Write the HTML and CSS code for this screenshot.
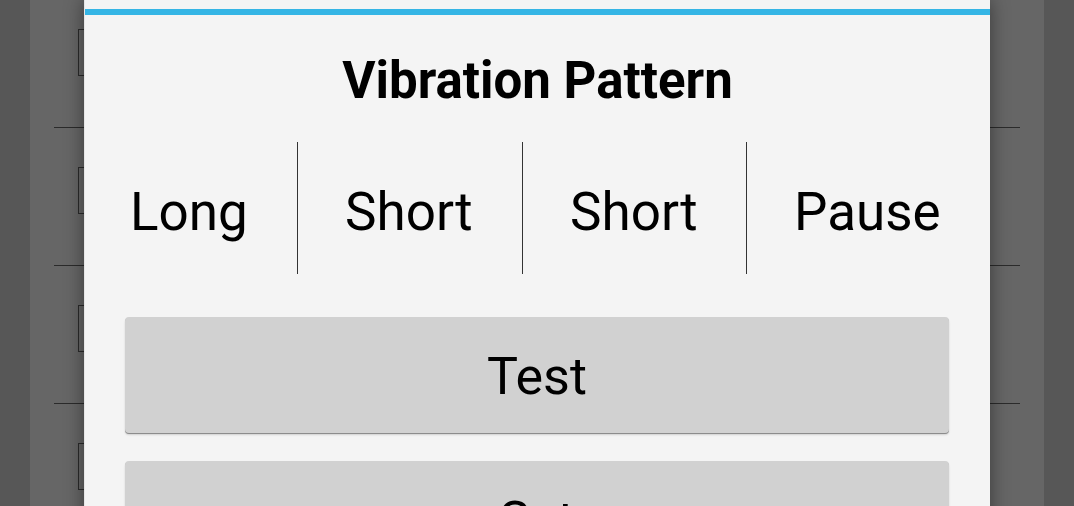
FILE: index.html
```html
<!DOCTYPE html>
<html lang="en">
<head>
  <meta charset="UTF-8">
  <meta name="viewport" content="width=device-width, initial-scale=1.0">
  <title>Vibration Pattern</title>
  <link rel="stylesheet" href="styles.css">
</head>
<body>
  <div class="screen">
    <ul class="list">
      <li class="row"><span class="checkbox"></span></li>
      <li class="row"><span class="checkbox"></span></li>
      <li class="row"><span class="checkbox"></span></li>
      <li class="row"><span class="checkbox"></span></li>
    </ul>
  </div>

  <div class="dialog">
    <div class="dialog-accent"></div>
    <h1 class="dialog-title">Vibration Pattern</h1>

    <div class="pattern">
      <div class="step first">Long</div>
      <div class="divider"></div>
      <div class="step">Short</div>
      <div class="divider"></div>
      <div class="step">Short</div>
      <div class="divider"></div>
      <div class="step">Pause</div>
    </div>

    <div class="actions">
      <button class="btn">Test</button>
      <button class="btn">Set</button>
    </div>
  </div>
</body>
</html>
```

FILE: styles.css
```css
html, body {
  height: 100%;
}

body {
  margin: 0;
  background-color: #575757;
  font-family: Roboto, "Noto Sans", sans-serif;
  overflow: hidden;
}

/* dimmed list behind the dialog */
.screen {
  height: 100%;
  padding: 0 30px;
}

.list {
  list-style: none;
  margin: -10px 0 0;
  padding: 0 24px;
  min-height: calc(100% + 10px);
  background-color: #666;
}

.row {
  height: 138px;
  border-bottom: 1px solid #2b2b2b;
  padding-top: 39px;
  box-sizing: border-box;
}

.checkbox {
  display: block;
  width: 44px;
  height: 45px;
  margin-left: 24px;
  border: 1px solid #2b2b2b;
}

/* dialog */
.dialog {
  position: absolute;
  left: 84px;
  top: 0;
  width: 906px;
  height: 560px;
  background-color: #f4f4f4;
  border-left: 1px solid #e6e6e6;
  box-sizing: border-box;
  box-shadow: 0 0 18px rgba(0, 0, 0, 0.45);
}

.dialog-accent {
  margin-top: 9px;
  height: 6px;
  background-color: #35b5e5;
}

.dialog-title {
  margin: 0;
  padding-top: 36px;
  height: 90px;
  box-sizing: border-box;
  text-align: center;
  font-size: 51px;
  line-height: 60px;
  font-weight: bold;
  color: #000;
}

.pattern {
  display: grid;
  grid-template-columns: 212px 1px 224px 1px 223px 1px auto;
  height: 132px;
  margin-top: 37px;
}

.step {
  display: flex;
  align-items: center;
  padding-left: 47px;
  padding-top: 7px;
  font-size: 53px;
  color: #000;
}

.step.first {
  padding-left: 45px;
}

.divider {
  background-color: #333;
}

.actions {
  display: flex;
  flex-direction: column;
  gap: 28px;
  margin: 43px 41px 0 40px;
}

.btn {
  height: 116px;
  border: none;
  border-radius: 4px;
  background-color: #d1d1d1;
  box-shadow: 0 1px 0 #8c8c8c, 0 2px 2px rgba(0, 0, 0, 0.15);
  font-family: Roboto, "Noto Sans", sans-serif;
  font-size: 52px;
  color: #000;
  padding: 2px 0 0;
}
```
